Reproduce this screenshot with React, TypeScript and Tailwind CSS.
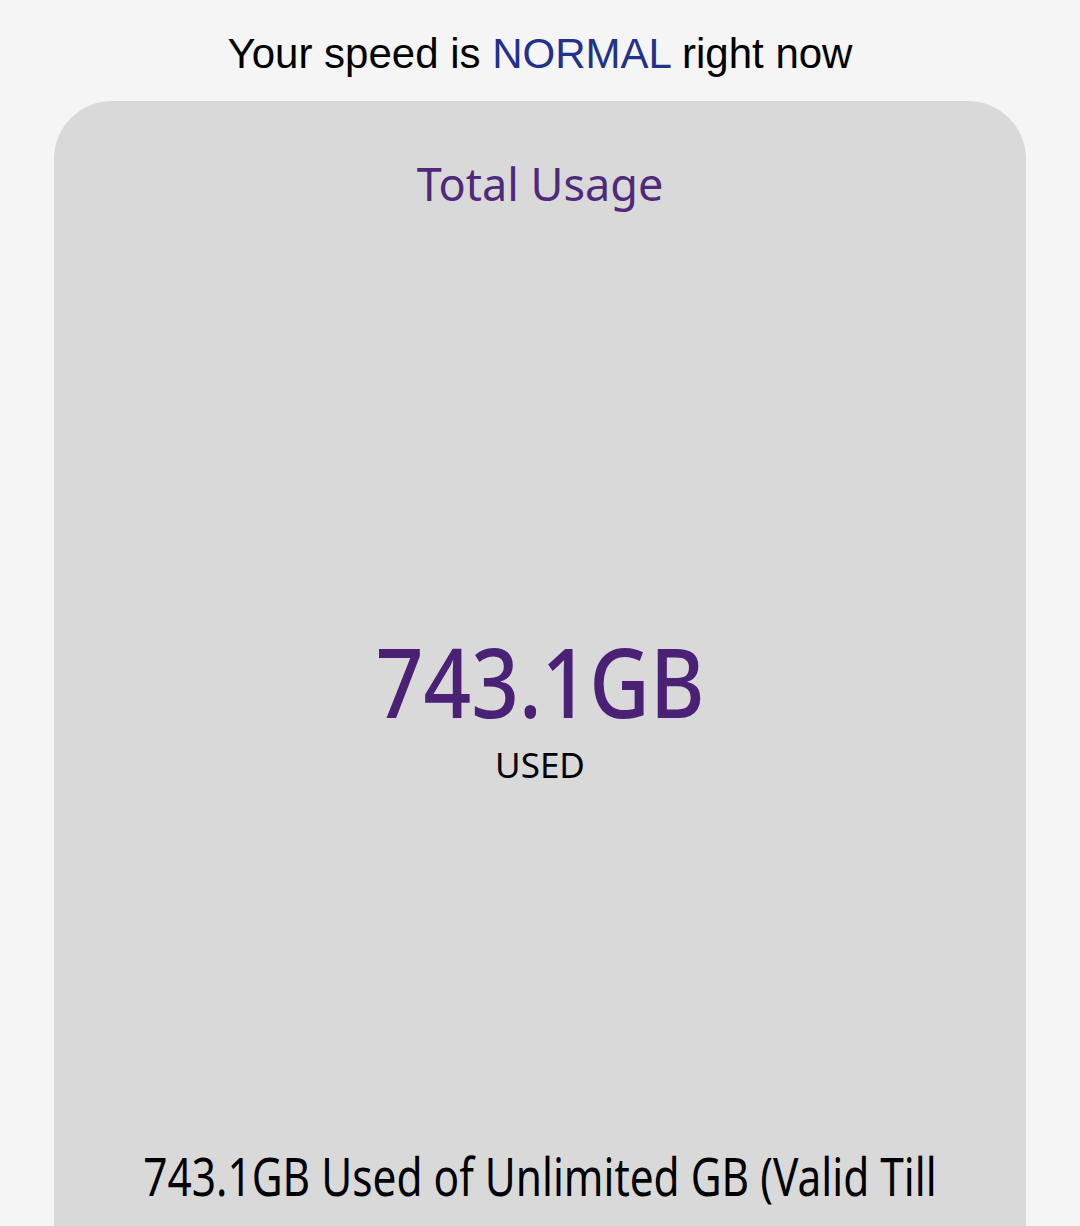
export default function App() {
  return (
    <div className="min-h-[1226px] bg-[#f5f5f5] overflow-hidden">
      <div className="h-[101px] flex items-center justify-center pt-[6px]">
        <p className="font-['Liberation_Sans',Arial,sans-serif] text-[42px] leading-none text-black">
          Your speed is <span className="text-[#22318c]">NORMAL</span> right now
        </p>
      </div>

      <div className="mx-[54px] h-[1200px] rounded-t-[58px] bg-[#d9d9d9] flex flex-col items-center font-['Noto_Sans',sans-serif]">
        <h2 className="mt-[53px] text-[45px] leading-[60px] text-[#4f2a7a]">Total Usage</h2>

        <div className="mt-[416px] flex flex-col items-center">
          <div className="scale-x-[0.86] text-[97px] leading-[100px] font-medium text-[#4b2176]">743.1GB</div>
          <div className="mt-[15px] text-[35px] leading-[40px] text-black">USED</div>
        </div>

        <p className="mt-[351px] w-[1010px] shrink-0 scale-x-[0.8] text-center text-[53px] leading-[80px] text-black">
          743.1GB Used of Unlimited GB (Valid Till 28 Feb 2025)
        </p>
      </div>
    </div>
  );
}
